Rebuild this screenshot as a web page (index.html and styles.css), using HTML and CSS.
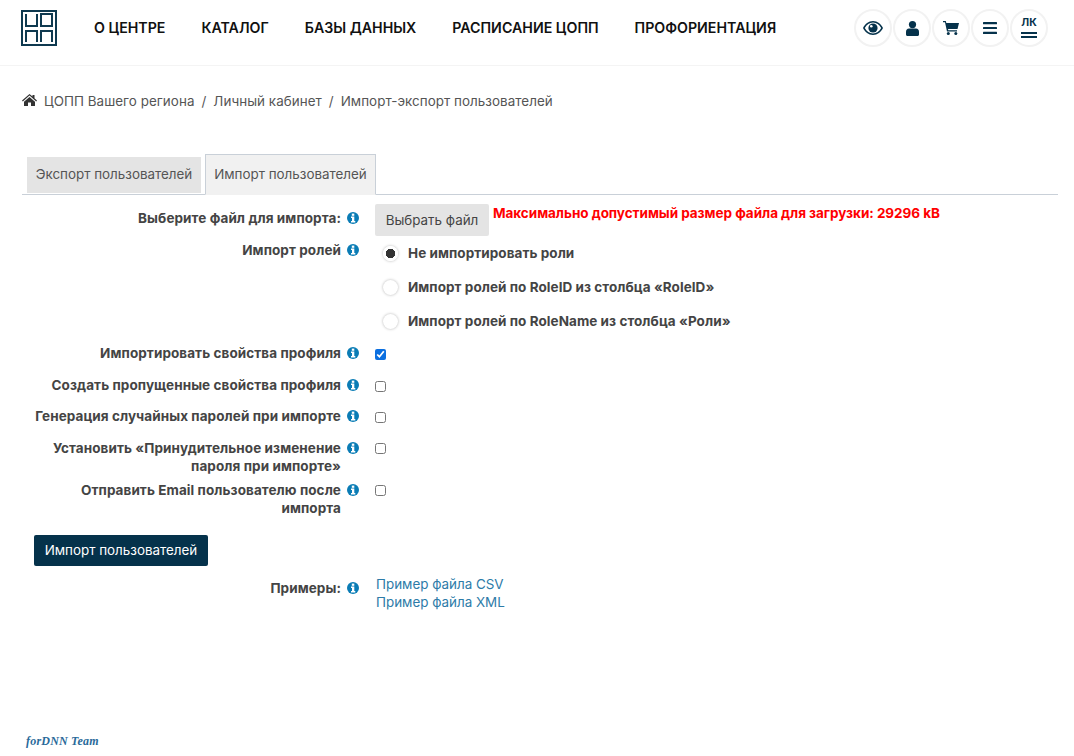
FILE: index.html
```html
<!DOCTYPE html>
<html lang="ru">
<head>
<meta charset="utf-8">
<title>Импорт-экспорт пользователей</title>
<link rel="stylesheet" href="styles.css">
</head>
<body>
<svg class="sprite" width="0" height="0">
  <symbol id="info" viewBox="0 0 12 12"><circle cx="6" cy="6" r="6" fill="#0a7cb5"/><rect x="4.800" y="1.600" width="2.500" height="2.200" fill="#fff"/><path d="M4 4.600h3.300v4.500h1v1.300H4V9.100h1V5.900H4z" fill="#fff"/></symbol>
</svg>
<header class="topbar">
  <svg class="logo" width="36" height="36" viewBox="0 0 36 36" fill="none" stroke="#0f3a50" stroke-width="2">
    <rect x="1" y="1" width="34" height="34"/>
    <path d="M5 4v12h12M16 4v12M20 4h11v12H20zM5 32V21h11v11M20 32V21h11v11"/>
  </svg>
  <nav class="menu">
    <a>О центре</a><a>Каталог</a><a>Базы данных</a><a>Расписание ЦОПП</a><a>Профориентация</a>
  </nav>
  <div class="tools">
    <span class="tool"><svg width="20" height="14" viewBox="0 0 20 14"><path d="M10 0C5.500 0 2 3 0 7c2 4 5.500 7 10 7s8-3 10-7c-2-4-5.500-7-10-7zm0 12.500c-3.500 0-6.500-2.300-8.200-5.500C3.500 3.800 6.500 1.500 10 1.500s6.500 2.300 8.200 5.500c-1.700 3.200-4.700 5.500-8.200 5.500z" fill="#05324b"/><circle cx="10" cy="7" r="4.600" fill="#05324b"/><circle cx="8.300" cy="5.300" r="1.300" fill="#fff"/></svg></span>
    <span class="tool"><svg width="13" height="15" viewBox="0 0 13 15" fill="#05324b"><circle cx="6.500" cy="3.600" r="3.600"/><path d="M3 7.500h7c1.800 0 3 1.400 3 3.200V13.500c0 .9-.6 1.500-1.500 1.500h-10C.6 15 0 14.400 0 13.500v-2.800C0 8.900 1.200 7.500 3 7.500z"/></svg></span>
    <span class="tool"><svg width="16" height="14" viewBox="0 0 16 14" fill="#05324b"><path d="M0 0h2.800l.5 2H16l-1.500 6H5l.3 1.300H14v1.200H4L2 1.200H0z"/><circle cx="5.300" cy="12.500" r="1.500"/><circle cx="12.800" cy="12.500" r="1.500"/></svg></span>
    <span class="tool"><svg width="14" height="12" viewBox="0 0 14 12" fill="#05324b"><rect width="14" height="2.200" rx=".5"/><rect y="4.900" width="14" height="2.200" rx=".5"/><rect y="9.800" width="14" height="2.200" rx=".5"/></svg></span>
    <span class="tool tool-lk"><b>ЛК</b><i></i><i></i></span>
  </div>
</header>

<main class="page">
  <div class="crumbs">
    <svg width="15" height="12" viewBox="0 0 15 12" fill="#333"><path d="M7.500 0L10.500 2.600V1h2v3.300L15 6.500l-.8.9L7.500 1.600.8 7.400 0 6.500z"/><path d="M7.500 3L13 7.700V12H9V8.500H6V12H2V7.700z"/></svg>
    <a>ЦОПП Вашего региона</a><span>/</span><a>Личный кабинет</a><span>/</span><a>Импорт-экспорт пользователей</a>
  </div>

  <div class="tabs">
    <a class="tab">Экспорт пользователей</a>
    <a class="tab tab-active">Импорт пользователей</a>
  </div>

  <form class="form">
    <div class="row row-file">
      <label class="lbl">Выберите файл для импорта:</label><svg class="info"><use href="#info"/></svg>
      <div class="ctl file-ctl"><span class="file-btn">Выбрать файл</span><span class="limit">Максимально допустимый размер файла для загрузки: 29296 kB</span></div>
    </div>
    <div class="row row-roles">
      <label class="lbl">Импорт ролей</label><svg class="info"><use href="#info"/></svg>
      <div class="ctl radios">
        <label class="radio"><input type="radio" name="r" checked>Не импортировать роли</label>
        <label class="radio"><input type="radio" name="r">Импорт ролей по RoleID из столбца «RoleID»</label>
        <label class="radio"><input type="radio" name="r">Импорт ролей по RoleName из столбца «Роли»</label>
      </div>
    </div>
    <div class="row row-check">
      <label class="lbl">Импортировать свойства профиля</label><svg class="info"><use href="#info"/></svg>
      <div class="ctl"><input class="check" type="checkbox" checked></div>
    </div>
    <div class="row row-check">
      <label class="lbl">Создать пропущенные свойства профиля</label><svg class="info"><use href="#info"/></svg>
      <div class="ctl"><input class="check" type="checkbox"></div>
    </div>
    <div class="row row-check">
      <label class="lbl">Генерация случайных паролей при импорте</label><svg class="info"><use href="#info"/></svg>
      <div class="ctl"><input class="check" type="checkbox"></div>
    </div>
    <div class="row row-check row-two">
      <label class="lbl">Установить «Принудительное изменение пароля при импорте»</label><svg class="info"><use href="#info"/></svg>
      <div class="ctl"><input class="check" type="checkbox"></div>
    </div>
    <div class="row row-check row-two">
      <label class="lbl">Отправить Email пользователю после импорта</label><svg class="info"><use href="#info"/></svg>
      <div class="ctl"><input class="check" type="checkbox"></div>
    </div>
    <button class="submit" type="button">Импорт пользователей</button>
    <div class="row row-samples">
      <label class="lbl">Примеры:</label><svg class="info"><use href="#info"/></svg>
      <div class="ctl samples"><a>Пример файла CSV</a><a>Пример файла XML</a></div>
    </div>
  </form>
  <div class="credit">forDNN Team</div>
</main>
</body>
</html>
```

FILE: styles.css
```css
* { box-sizing: border-box; }
html, body { margin: 0; height: 756px; overflow: hidden; }
body { background: #fff; font-family: Inter, "Noto Sans", sans-serif; font-size: 13.400px; color: #444; }
.sprite { display: block; height: 0; }

.topbar { height: 66px; border-bottom: 1px solid #f4f4f4; display: flex; align-items: flex-start; padding: 10px 26px 0 21px; }
.logo { flex: none; display: block; }
.menu { display: flex; gap: 36px; margin: 10px 0 0 37px; font-size: 14.200px; font-weight: 600; line-height: 16px; text-transform: uppercase; color: #111; }
.tools { margin-left: auto; margin-top: -1px; display: flex; gap: 1px; }
.tool { width: 38px; height: 38px; border: 2px solid #f2f2f2; border-radius: 50%; display: flex; flex-direction: column; align-items: center; justify-content: center; }
.tool-lk b { font-size: 10.500px; line-height: 10px; color: #05324b; font-weight: 700; margin-bottom: 2px; }
.tool-lk i { display: block; width: 16px; height: 2px; background: #05324b; margin-top: 2px; }

.page { padding: 0 16px 0 22px; }
.crumbs { display: flex; align-items: center; height: 20px; margin-top: 25px; color: #555; gap: 6px; letter-spacing: .05px; }
.crumbs svg { margin-right: 1px; margin-top: -3px; }
.crumbs span { margin: 0 1px; }

.tabs { display: flex; align-items: flex-end; gap: 4px; height: 41px; margin-top: 43px; padding-left: 5px; border-bottom: 1px solid #c9d0d8; }
.tab { height: 36px; width: 174px; background: #e4e4e4; color: #555; display: flex; align-items: center; justify-content: center; margin-bottom: 1px; padding-bottom: 2px; }
.tab-active { height: 41px; width: 171px; margin-bottom: -1px; background: #f1f1f1; border: 1px solid #c9d0d8; border-bottom: 1px solid #f1f1f1; padding-bottom: 1px; }

.form { padding: 9px 0 0 12px; }
.row { display: grid; grid-template-columns: 307px 12px 1fr; column-gap: 6px; align-items: start; }
.lbl { font-size: 13.500px; letter-spacing: .08px; font-weight: 700; color: #444; text-align: right; line-height: 18px; }
.info { width: 12px; height: 12px; margin-top: 3px; }
.ctl { margin-left: 10px; }

.row-file { height: 37px; }
.row-file .lbl { margin-top: 5px; }
.row-file .info { margin-top: 8px; }
.file-ctl { display: flex; align-items: flex-start; gap: 4px; margin-left: 10px; }
.file-btn { width: 114px; height: 32px; background: #e4e4e4; border-radius: 2px; display: flex; align-items: center; justify-content: center; color: #444; }
.limit { font-size: 13.500px; letter-spacing: -.04px; color: #f00; font-weight: 700; line-height: 18px; white-space: nowrap; }

.row-roles { height: 104px; }
.radios { display: flex; flex-direction: column; gap: 16px; padding-top: 3px; }
.radio { display: flex; align-items: center; height: 18px; font-size: 13.500px; letter-spacing: .06px; font-weight: 700; color: #444; padding-left: 8px; gap: 10px; }
.radio input { appearance: none; margin: 0; width: 15px; height: 15px; border-radius: 50%; background: #fff; box-shadow: 0 0 3px rgba(0,0,0,.3); }
.radio input:checked { background: radial-gradient(circle, #333 0 4.500px, #fff 5px); }

.row-check { height: 31.500px; }
.row-check .lbl { margin-top: -1px; }
.row-check .info { margin-top: 2px; }
.row-two { height: 42px; margin-top: -1px; }
.row-two + .row-two { margin-top: 0; }
.row-two .lbl { margin-top: 0; }
.row-two .info { margin-top: 3px; }
.check { display: block; margin: 4px 0 0; width: 11px; height: 11px; accent-color: #0b6fe0; }

.submit { display: block; width: 174px; height: 31px; margin: 12px 0 0; border: 0; border-radius: 2px; background: #05324b; color: #fff; font: inherit; }
.row-samples { margin-top: 9px; }
.row-samples .lbl { margin-top: 4px; }
.row-samples .info { margin-top: 7px; }
.samples { display: flex; flex-direction: column; line-height: 18px; color: #2d7ba8; margin-left: 11px; }

.credit { margin: 123px 0 0 4px; font: italic 700 12px "Liberation Serif", serif; color: #2a6a9a; letter-spacing: .2px; }
```
